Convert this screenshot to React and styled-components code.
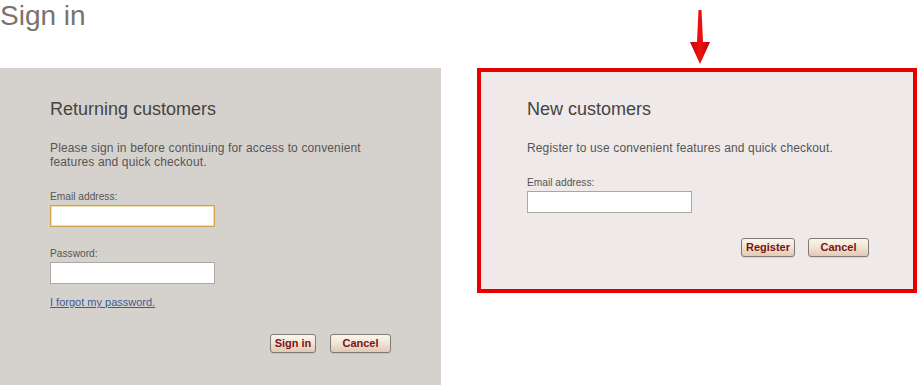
import React from 'react';
import styled, { createGlobalStyle } from 'styled-components';

const GlobalStyle = createGlobalStyle`
  html, body { margin: 0; padding: 0; background: #fff; }
  body { font-family: Arial, "Liberation Sans", sans-serif; }
  * { box-sizing: border-box; }
`;

const Page = styled.div`
  position: relative;
  width: 917px;
  height: 385px;
  overflow: hidden;
`;

const Title = styled.h1`
  margin: 0 0 36px 0;
  font-size: 28px;
  line-height: 32px;
  font-weight: normal;
  color: #787370;
`;

const Columns = styled.div`
  display: flex;
  align-items: flex-start;
  gap: 36px;
`;

const Panel = styled.section`
  display: flex;
  flex-direction: column;
  width: ${p => p.$width}px;
  height: ${p => p.$height}px;
  padding: ${p => p.$pad};
  background: ${p => p.$bg};
  border: ${p => (p.$highlight ? '4px solid #e80000' : 'none')};
`;

const Heading = styled.h2`
  margin: 0 0 21px 0;
  font-size: 18px;
  line-height: 22px;
  font-weight: normal;
  color: #444;
`;

const Intro = styled.p`
  margin: 0 0 21px 0;
  font-size: 12px;
  line-height: 14px;
  letter-spacing: 0.14px;
  color: #555;
  width: ${p => p.$width || 'auto'};
`;

const Label = styled.label`
  display: block;
  margin-bottom: 2px;
  font-size: 10.2px;
  line-height: 13px;
  color: #555;
`;

const Input = styled.input`
  display: block;
  width: 165px;
  height: 22px;
  margin: 0 0 ${p => p.$after || 0}px 0;
  padding: 2px 4px;
  background: #fff;
  border: 1px solid ${p => (p.$focus ? '#d2a24c' : '#aaa7a4')};
  box-shadow: ${p => (p.$focus ? 'inset 0 0 0 1px #f1dcae' : 'none')};
  outline: none;
  font: 12px Arial, "Liberation Sans", sans-serif;
`;

const Forgot = styled.a`
  display: block;
  font-size: 11px;
  line-height: 13px;
  color: #3d5a96;
  text-decoration: underline;
  cursor: pointer;
  margin-bottom: 25px;
  width: max-content;
`;

const Actions = styled.div`
  display: flex;
  justify-content: flex-end;
  gap: ${p => p.$gap}px;
  margin-top: ${p => p.$top || 0}px;
`;

const Button = styled.button`
  width: ${p => p.$w}px;
  height: 19px;
  padding: 0;
  border: 1px solid #7e7a76;
  border-radius: 3px;
  background: linear-gradient(to bottom, #fcf6ee 0%, #f0e3d4 50%, #dfcab5 100%);
  box-shadow: 0 1px 0 rgba(0, 0, 0, 0.08);
  color: #7a1414;
  font: bold 11px Arial, "Liberation Sans", sans-serif;
  line-height: 17px;
  cursor: pointer;
`;

const Arrow = styled.svg`
  position: absolute;
  left: 688px;
  top: 9px;
`;

function DownArrow() {
  return (
    <Arrow width="24" height="56" viewBox="0 0 24 56">
      <defs>
        <linearGradient id="arr" x1="0" y1="0" x2="1" y2="0">
          <stop offset="0" stopColor="#c40000" />
          <stop offset="0.5" stopColor="#f01010" />
          <stop offset="1" stopColor="#b80000" />
        </linearGradient>
      </defs>
      <path d="M10.5 1 L13.5 1 L15 33 L22 33 L12 55 L2 33 L9 33 Z" fill="url(#arr)" />
    </Arrow>
  );
}

export default function App() {
  return (
    <Page>
      <GlobalStyle />
      <Title>Sign in</Title>
      <Columns>
        <Panel $width={441} $height={317} $pad="30px 50px 0 50px" $bg="#d5d2cd">
          <Heading>Returning customers</Heading>
          <Intro $width="330px">
            Please sign in before continuing for access to convenient features and quick checkout.
          </Intro>
          <Label>Email address:</Label>
          <Input $focus $after={20} />
          <Label>Password:</Label>
          <Input type="password" $after={12} />
          <Forgot>I forgot my password.</Forgot>
          <Actions $gap={14}>
            <Button $w={46}>Sign in</Button>
            <Button $w={61}>Cancel</Button>
          </Actions>
        </Panel>
        <Panel $width={440} $height={225} $pad="26px 44px 0 46px" $bg="#efe9e9" $highlight>
          <Heading>New customers</Heading>
          <Intro>Register to use convenient features and quick checkout.</Intro>
          <Label>Email address:</Label>
          <Input />
          <Actions $gap={13} $top={25}>
            <Button $w={54}>Register</Button>
            <Button $w={61}>Cancel</Button>
          </Actions>
        </Panel>
      </Columns>
      <DownArrow />
    </Page>
  );
}
